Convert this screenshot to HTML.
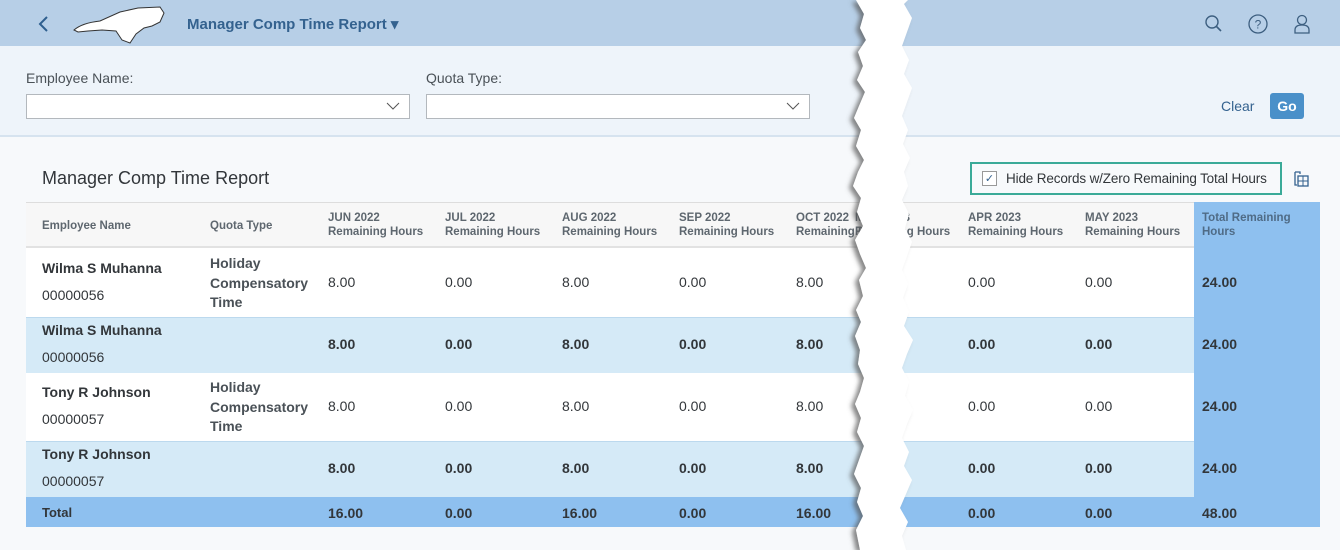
<!DOCTYPE html>
<html><head><meta charset="utf-8"><style>
*{margin:0;padding:0;box-sizing:border-box}
body{width:1340px;height:550px;overflow:hidden;background:#f7f9fb;font-family:"Liberation Sans",sans-serif;position:relative;color:#32363a}
.a{position:absolute}
.hdr{left:0;top:0;width:1340px;height:46px;background:#b7cfe7}
.fb{left:0;top:46px;width:1340px;height:91px;background:#eef4fa;border-bottom:2px solid #d6e3ef}
.lbl{font-size:14px;color:#4a5157}
.inp{height:25px;background:#fff;border:1px solid #b3b8bd}
.th{font-size:11.5px;font-weight:bold;color:#5e676f;line-height:14px}
.c{font-size:14px}
.b{font-weight:bold}
</style></head><body>
<div class="a hdr"></div>
<svg class="a" style="left:36px;top:14px" width="16" height="20"><path d="M11 3 L4 10 L11 17" stroke="#2f5f8f" stroke-width="2" fill="none"/></svg>
<svg class="a" style="left:72px;top:4px" width="96" height="40"><path d="M2 26 Q10 19 28 17 L48 8 L66 4 L88 3 L92 9 L88 18 L80 22 L72 24 L64 30 L58 39 L50 36 L44 27 L30 26 L16 27 L6 28 Z" fill="#fff" stroke="#333" stroke-width="1"/></svg>
<div class="a" style="left:187px;top:15px;font-size:15px;font-weight:bold;color:#34628f">Manager Comp Time Report ▾</div>
<svg class="a" style="left:1204px;top:14px" width="20" height="20"><circle cx="8" cy="8" r="6" stroke="#3d5f80" stroke-width="1.4" fill="none"/><path d="M12.5 12.5 L17 17" stroke="#3d5f80" stroke-width="1.6"/></svg>
<svg class="a" style="left:1247px;top:13px" width="22" height="22"><circle cx="11" cy="11" r="9" stroke="#3d5f80" stroke-width="1.3" fill="none"/><text x="11" y="15.5" font-size="12" text-anchor="middle" fill="#3d5f80" font-family="Liberation Sans">?</text></svg>
<svg class="a" style="left:1292px;top:13px" width="20" height="22"><circle cx="10" cy="7" r="4.5" stroke="#3d5f80" stroke-width="1.3" fill="none"/><path d="M3 20 V17 Q3 12 10 12 Q17 12 17 17 V20 Z" stroke="#3d5f80" stroke-width="1.3" fill="none"/></svg>
<div class="a fb"></div>
<div class="a lbl" style="left:26px;top:70px">Employee Name:</div>
<div class="a inp" style="left:26px;top:94px;width:384px"></div>
<div class="a lbl" style="left:426px;top:70px">Quota Type:</div>
<div class="a inp" style="left:426px;top:94px;width:384px"></div>
<svg class="a" style="left:386px;top:100px" width="14" height="12"><path d="M1 3 L7 9 L13 3" stroke="#555" fill="none"/></svg>
<svg class="a" style="left:786px;top:100px" width="14" height="12"><path d="M1 3 L7 9 L13 3" stroke="#555" fill="none"/></svg>
<div class="a" style="left:1221px;top:98px;font-size:14px;color:#34628f">Clear</div>
<div class="a" style="left:1270px;top:93px;width:34px;height:26px;background:#4a90c9;border-radius:3px;color:#fff;font-size:14px;font-weight:bold;text-align:center;line-height:26px">Go</div>
<div class="a" style="left:42px;top:168px;font-size:18px;color:#32363a">Manager Comp Time Report</div>
<div class="a" style="left:970px;top:162px;width:312px;height:33px;border:2px solid #3aaa98"></div>
<div class="a" style="left:982px;top:171px;width:15px;height:15px;border:1px solid #999;background:#fff;font-size:11px;color:#34628f;text-align:center;line-height:14px">✓</div>
<div class="a" style="left:1006px;top:171px;font-size:13.5px;letter-spacing:-0.15px">Hide Records w/Zero Remaining Total Hours</div>
<svg class="a" style="left:1291px;top:170px" width="18" height="18"><path d="M4 2 H9 L9 4 M4 2 V15 H6" stroke="#34628f" fill="none" stroke-width="1.3"/><rect x="7" y="6" width="10" height="10" stroke="#34628f" fill="none" stroke-width="1.3"/><path d="M7 11 H17 M12 6 V16" stroke="#34628f" stroke-width="1"/></svg>

<div class="a" style="left:26px;top:202px;width:1294px;height:46px;background:#f7f7f7;border-top:1px solid #ddd;border-bottom:2px solid #e2e2e2"></div>
<div class="a" style="left:26px;top:248px;width:1294px;height:69px;background:#fff"></div>
<div class="a" style="left:26px;top:317px;width:1294px;height:56px;background:#d5eaf7;border-top:1px solid #bcd9ee"></div>
<div class="a" style="left:26px;top:373px;width:1294px;height:68px;background:#fff"></div>
<div class="a" style="left:26px;top:441px;width:1294px;height:56px;background:#d5eaf7;border-top:1px solid #bcd9ee"></div>
<div class="a" style="left:26px;top:497px;width:1294px;height:30px;background:#8ec0ef"></div>
<div class="a" style="left:1194px;top:202px;width:126px;height:295px;background:#8ec0ef"></div>

<div class="a th" style="left:42px;top:219px">Employee Name</div>
<div class="a th" style="left:210px;top:219px">Quota Type</div>
<div class="a th" style="left:328px;top:211px">JUN 2022<br>Remaining Hours</div>
<div class="a th" style="left:445px;top:211px">JUL 2022<br>Remaining Hours</div>
<div class="a th" style="left:562px;top:211px">AUG 2022<br>Remaining Hours</div>
<div class="a th" style="left:679px;top:211px">SEP 2022<br>Remaining Hours</div>
<div class="a th" style="left:796px;top:211px">OCT 2022<br>Remaining Hours</div>
<div class="a th" style="left:855px;top:211px">MAR 2023<br>Remaining Hours</div>
<div class="a th" style="left:968px;top:211px">APR 2023<br>Remaining Hours</div>
<div class="a th" style="left:1085px;top:211px">MAY 2023<br>Remaining Hours</div>
<div class="a th" style="left:1202px;top:211px;color:#4f6b86">Total Remaining<br>Hours</div>

<div class="a c b" style="left:42px;top:260px">Wilma S Muhanna</div>
<div class="a c" style="left:42px;top:287px">00000056</div>
<div class="a c b" style="left:210px;top:254px;line-height:19.5px;color:#4a5157">Holiday<br>Compensatory<br>Time</div>
<div class="a c b" style="left:42px;top:322px">Wilma S Muhanna</div>
<div class="a c" style="left:42px;top:349px">00000056</div>
<div class="a c b" style="left:42px;top:384px">Tony R Johnson</div>
<div class="a c" style="left:42px;top:411px">00000057</div>
<div class="a c b" style="left:210px;top:378px;line-height:19.5px;color:#4a5157">Holiday<br>Compensatory<br>Time</div>
<div class="a c b" style="left:42px;top:446px">Tony R Johnson</div>
<div class="a c" style="left:42px;top:473px">00000057</div>
<div class="a c b" style="left:42px;top:505px;font-size:13px">Total</div>

<div class="a c" style="left:328px;top:274px">8.00</div><div class="a c" style="left:445px;top:274px">0.00</div><div class="a c" style="left:562px;top:274px">8.00</div><div class="a c" style="left:679px;top:274px">0.00</div><div class="a c" style="left:796px;top:274px">8.00</div><div class="a c" style="left:968px;top:274px">0.00</div><div class="a c" style="left:1085px;top:274px">0.00</div><div class="a c b" style="left:1202px;top:274px">24.00</div>
<div class="a c b" style="left:328px;top:336px">8.00</div><div class="a c b" style="left:445px;top:336px">0.00</div><div class="a c b" style="left:562px;top:336px">8.00</div><div class="a c b" style="left:679px;top:336px">0.00</div><div class="a c b" style="left:796px;top:336px">8.00</div><div class="a c b" style="left:968px;top:336px">0.00</div><div class="a c b" style="left:1085px;top:336px">0.00</div><div class="a c b" style="left:1202px;top:336px">24.00</div>
<div class="a c" style="left:328px;top:398px">8.00</div><div class="a c" style="left:445px;top:398px">0.00</div><div class="a c" style="left:562px;top:398px">8.00</div><div class="a c" style="left:679px;top:398px">0.00</div><div class="a c" style="left:796px;top:398px">8.00</div><div class="a c" style="left:968px;top:398px">0.00</div><div class="a c" style="left:1085px;top:398px">0.00</div><div class="a c b" style="left:1202px;top:398px">24.00</div>
<div class="a c b" style="left:328px;top:460px">8.00</div><div class="a c b" style="left:445px;top:460px">0.00</div><div class="a c b" style="left:562px;top:460px">8.00</div><div class="a c b" style="left:679px;top:460px">0.00</div><div class="a c b" style="left:796px;top:460px">8.00</div><div class="a c b" style="left:968px;top:460px">0.00</div><div class="a c b" style="left:1085px;top:460px">0.00</div><div class="a c b" style="left:1202px;top:460px">24.00</div>
<div class="a c b" style="left:328px;top:505px">16.00</div><div class="a c b" style="left:445px;top:505px">0.00</div><div class="a c b" style="left:562px;top:505px">16.00</div><div class="a c b" style="left:679px;top:505px">0.00</div><div class="a c b" style="left:796px;top:505px">16.00</div><div class="a c b" style="left:968px;top:505px">0.00</div><div class="a c b" style="left:1085px;top:505px">0.00</div><div class="a c b" style="left:1202px;top:505px">48.00</div>

<svg class="a" style="left:830px;top:0" width="100" height="550">
<defs><filter id="sh" x="-50%" y="-5%" width="200%" height="110%"><feDropShadow dx="-4" dy="2" stdDeviation="2.5" flood-color="#555" flood-opacity="0.7"/></filter></defs>
<polygon filter="url(#sh)" fill="#fff" points="
26,0 34,14 30,28 36,40 28,52 33,66 27,80 35,92 29,106 24,118 31,130 26,146 34,160 28,172 23,186 31,198 27,212 33,226 25,240 30,254 36,268 29,280 33,296 26,310 31,322 25,336 30,350 28,364 34,378 30,392 25,404 31,418 27,432 34,446 29,460 24,474 31,488 27,502 33,516 26,530 30,550
76,550 72,536 78,522 70,508 76,494 82,480 74,466 79,452 72,438 77,424 83,410 75,396 79,382 72,368 77,354 83,340 74,326 79,312 73,298 78,284 72,270 77,256 82,242 75,228 79,214 72,200 78,186 74,172 80,158 73,144 78,130 72,116 77,102 82,88 74,74 79,60 72,46 77,32 82,18 74,4 78,0"/>
</svg>
</body></html>
